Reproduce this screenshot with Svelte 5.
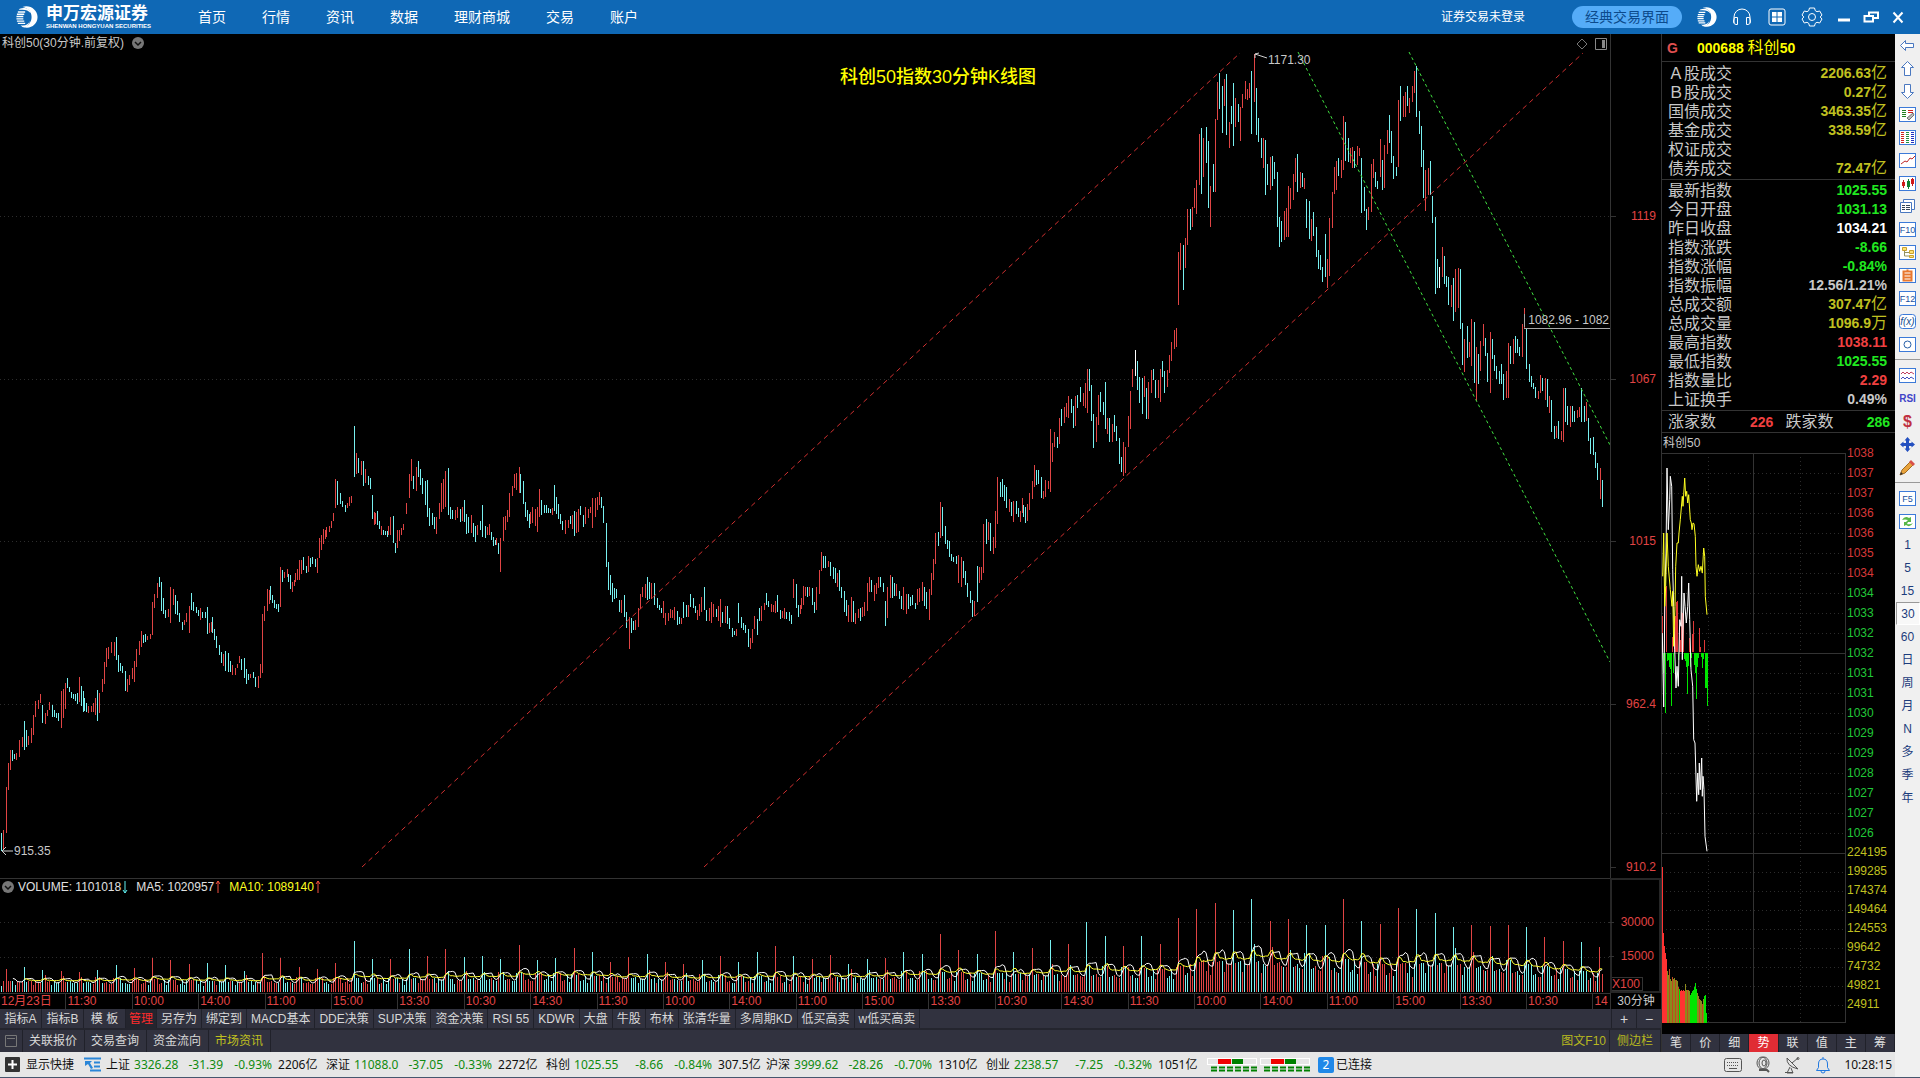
<script lang="ts">
	type Bar = { x: number; top: number; bottom: number; kind: string };

	const PLOT_W = 1610;
	const PRICE_H = 844;
	const VOL_H = 115;

	// each block: origin, units per pixel on x, then "x high low kind" (y in thirds of a pixel)
	const blocks = [
		{
			x: 0,
			y: 366,
			step: 2.24,
			bars: "3 1300 1352 d;8 1290 1350 u;15 1160 1300 u;19 1090 1170 u;24 1050 1110 u;28 1050 1082 d;37 1060 1080 u;43 1020 1070 u;50 1012 1040 u;55 962 1050 d;64 1007 1035 u;71 985 1030 u;75 945 1005 u;80 903 950 u;91 882 910 u;95 915 968 d;102 940 973 u;111 905 930 u;117 915 950 d;131 940 962 d;138 872 983 u;147 848 928 u;151 835 865 d;160 875 893 d;173 878 913 d;178 832 905 u;186 872 935 d;199 918 940 u;210 908 935 u;219 870 962 d;222 878 940 u;229 838 876 u;235 787 852 u;238 745 800 u;250 727 760 u;261 712 780 d;265 765 815 d;274 798 818 d;281 812 872 d;285 837 875 u;297 803 838 u;301 783 845 u;306 747 800 u;313 723 765 u;318 692 740 u;326 703 725 d;337 702 718 u;342 606 706 u;346 582 625 u;353 548 595 u;357 532 560 d;362 545 632 d;370 630 655 d;377 627 650 u;382 562 668 u;388 568 615 u;393 585 642 d;397 603 645 d;409 665 690 d;417 640 665 u;424 618 698 u;429 580 630 d;440 622 640 d;449 625 660 u;460 635 655 d;465 620 702 d;469 668 700 u;477 652 700 d;485 708 745 d;492 735 765 d;497 757 790 d;505 752 812 d;512 758 815 d;521 795 825 u;528 805 825 u;537 768 790 u;547 775 835 d;552 808 852 d;561 822 835 u;568 815 835 d;573 832 860 d;579 828 865 u;584 792 835 u;588 643 820 u;593 618 663 u;599 568 632 u;607 558 600 d;615 600 625 d;623 612 635 d;628 500 620 u;633 510 545 d;643 508 530 u;651 525 567 d;655 545 577 u;663 520 545 u;671 480 540 u;680 470 510 d;686 497 518 d;691 468 515 u;699 470 493 d;706 478 500 d;711 475 520 u;716 413 475 u;724 387 432 u;732 380 410 u;743 362 385 u;747 340 362 u;751 238 325 u;757 243 315 d;763 280 312 d;773 315 335 d;782 292 318 u;787 288 308 u;794 78 230 d;799 160 222 u;804 175 220 d;810 183 225 u;814 183 257 d;819 208 250 u;830 233 267 d;834 285 358 d;838 335 375 u;846 333 375 d;854 378 405 u;867 393 410 d;875 350 405 u;882 347 430 d;886 428 460 d;890 390 445 u;903 373 390 u;910 310 342 u;917 222 295 u;921 178 243 u;926 228 268 d;933 200 272 u;937 183 230 d;942 207 255 d;947 235 283 d;957 240 350 d;963 325 377 d;969 338 375 d;978 352 402 u;984 308 358 u;989 250 335 u;998 212 322 u;1005 203 345 d;1009 320 358 d;1020 330 360 u;1025 320 355 u;1031 327 365 d;1040 300 365 d;1045 343 402 d;1056 345 400 u;1065 378 425 d;1076 362 390 d;1081 315 410 d;1088 378 413 d;1096 372 405 u;1105 410 438 d;1113 415 435 u;1117 430 462 d;1121 415 515 u;1128 352 422 u;1137 330 365 u;1141 280 350 u;1148 258 288 u;1152 223 265 u;1163 200 280 u;1167 222 280 d;1173 243 312 d;1177 305 350 d;1185 342 383 d;1193 320 368 u;1204 320 395 u;1209 267 350 u;1213 300 345 d;1225 315 340 d;1238 325 345 u;1243 255 332 d;1251 312 357 d;1260 362 390 d;1267 360 402 u;1279 347 372 d;1287 333 408 d;1295 328 395 u;1300 317 345 d;1307 345 380 d;1312 320 372 u;1323 320 340 u;1328 293 385 u;1335 293 352 u;1343 277 315 u;1347 290 325 d;1352 318 370 d;1358 370 502 d;1363 485 570 d;1372 550 605 d;1380 567 595 d;1387 600 635 d;1399 585 650 d;1404 635 685 d;1410 650 748 u;1415 655 698 d;1424 660 690 u;1430 625 682 u;1434 583 628 u;1440 560 592 u;1450 532 600 d;1459 550 598 u;1466 550 615 d;1473 595 625 d;1482 625 640 d;1486 602 655 u;1491 640 675 u;1502 628 655 u;1510 620 660 u;1517 633 675 d;1527 655 672 u;1532 605 655 d;1542 615 650 u;1547 582 620 d;1553 595 625 d;1562 630 660 u",
		},
		{
			x: 600,
			y: 316,
			step: 2.613,
			bars: "272 712 780 d;279 780 812 d;291 757 818 u;296 763 800 u;304 778 800 d;315 747 832 u;320 787 818 d;328 768 820 u;333 768 822 d;339 805 838 d;347 835 860 d;356 837 857 u;362 760 818 d;369 800 835 d;380 825 848 d;388 838 892 d;393 863 897 u;398 837 878 u;404 798 838 u;411 808 855 d;417 773 813 d;422 768 813 u;429 758 780 u;435 730 765 d;447 763 785 u;459 753 790 u;464 735 785 d;471 780 807 d;482 773 808 u;495 785 812 d;500 795 822 d;505 687 745 u;513 702 775 d;518 765 800 d;523 765 792 u;532 708 765 u;538 712 738 u;543 712 740 d;548 712 738 u;555 713 765 d;560 757 788 d;566 712 780 u;573 660 732 u;579 606 663 u;589 618 653 d;597 633 650 u;603 637 677 d;615 655 700 d;620 670 710 u;626 660 723 d;632 710 745 d;639 722 787 d;650 765 815 u;658 740 815 u;662 752 817 d;667 790 822 u;675 777 805 u;680 775 812 d;692 757 797 u;698 700 783 u;704 682 727 u;710 690 725 d;718 705 753 u;728 682 715 u;733 682 710 d;740 700 725 d;746 753 827 d;752 710 805 u;758 675 745 u;764 682 743 d;775 702 738 u;782 722 748 d;788 738 778 d;793 712 780 u;801 733 792 u;807 732 778 d;817 735 765 d;824 760 778 d;829 717 765 u;842 697 752 u;847 712 767 d;853 725 778 d;861 717 810 u;867 668 735 u;872 628 690 u;877 548 643 u;884 547 587 d;890 457 565 u;895 470 557 d;903 527 582 d;908 570 597 d;913 573 622 d;918 612 633 d;931 617 642 d;937 615 700 u;944 622 712 u;949 633 685 d;955 662 705 d;960 700 740 d;967 723 758 d;973 750 800 d;979 753 798 u;986 648 755 d;991 652 698 u;997 650 690 u;1002 522 668 u;1010 507 583 d;1016 515 570 u;1020 520 602 d;1027 560 612 u;1033 483 595 u;1039 382 522 u;1046 395 440 d;1051 387 440 d;1062 410 473 d;1070 447 485 u;1080 452 515 u;1088 452 492 d;1099 483 515 u;1103 445 490 u;1112 470 518 d;1117 463 512 u;1122 430 480 u;1130 393 447 u;1135 345 412 u;1145 360 403 d;1153 382 443 d;1160 422 446 u;1165 390 440 u;1172 393 418 u;1177 238 425 u;1182 280 335 u;1187 247 290 u;1195 262 293 d;1201 203 283 u;1206 177 228 d;1214 172 220 u;1219 158 200 u;1224 138 205 u;1231 148 188 d;1237 168 233 d;1242 138 228 u;1248 135 175 d;1255 112 155 d;1263 128 168 u;1273 57 188 u;1278 57 123 d;1284 105 212 d;1289 192 293 d;1297 202 275 u;1303 135 225 u;1308 127 185 d;1316 157 195 d;1320 97 237 d;1327 205 253 u;1332 205 275 d;1338 223 275 u;1344 195 245 d;1350 228 272 d;1357 263 343 d;1362 322 365 d;1368 277 378 u;1373 290 368 u;1381 197 290 u",
		},
		{
			x: 1130,
			y: 6,
			step: 3,
			bars: "2 1052 1168 u;8 988 1040 u;16 930 1008 w;22 963 1050 d;28 1010 1090 d;37 1015 1122 d;43 1008 1070 u;49 1045 1138 d;55 1025 1138 u;64 990 1060 u;70 987 1020 d;76 1020 1075 d;85 1020 1075 u;91 988 1085 u;97 963 1010 d;103 993 1058 d;112 990 1042 u;118 945 1000 u;124 905 962 u;133 870 928 u;139 865 922 u;145 637 795 u;151 610 690 u;160 615 750 d;166 595 683 u;172 507 615 u;181 507 570 d;187 500 562 u;193 445 505 u;199 420 522 u;208 283 435 u;214 265 462 d;220 293 412 u;229 262 368 d;235 303 503 d;241 437 560 u;250 372 455 d;256 238 455 u;262 125 240 u;268 98 207 d;277 137 280 d;283 117 197 u;289 103 285 d;298 247 325 u;304 197 252 d;310 130 318 d;316 175 262 u;325 192 247 d;331 200 303 u;337 163 203 u;346 123 178 u;352 147 180 u;358 130 175 u;364 93 283 d;373 42 187 u;379 145 285 d;385 233 305 d;394 293 355 d;400 295 383 u;406 300 465 d;412 373 435 d;421 350 450 u;427 348 437 d;433 367 417 d;442 397 560 d;448 532 620 d;454 543 605 d;463 513 600 u;469 505 590 u;475 437 590 u;481 443 507 u;490 403 480 u;496 353 427 u;502 343 455 d;511 397 443 u;517 398 442 d;523 415 447 u;529 477 565 d;538 483 597 d;544 537 602 u;550 517 588 d;559 562 650 d;565 630 687 d;571 645 690 d;577 680 725 d;586 583 710 d;592 657 743 u;598 533 707 u;607 457 565 u;613 380 462 u;619 362 450 u;625 353 408 d;634 360 415 u;640 228 390 u;646 247 363 d;655 293 365 d;661 325 370 u;667 320 385 u;673 333 383 d;682 318 375 u;688 323 348 u;694 355 518 d;703 442 512 d;709 507 570 d;715 502 540 u;724 373 515 u;730 357 415 u;736 397 442 d;742 423 447 d;751 297 412 u;757 360 450 d;763 315 445 u;772 270 343 u;778 225 310 d;784 273 368 d;790 347 418 d;799 380 407 d;805 180 380 u;811 137 242 d;820 167 230 u;826 155 230 u;832 137 197 d;838 175 218 u;847 138 187 u;853 93 158 u;859 77 230 d;868 213 283 d;874 257 380 d;880 330 473 d;886 390 513 u;895 385 465 u;901 363 465 d;907 467 548 d;916 532 762 d;922 657 743 d;928 682 743 w;937 620 710 u;943 647 732 d;949 708 740 d;955 712 795 d;964 735 800 u;970 715 843 d;976 687 815 u;985 685 803 u;991 687 867 d;997 850 975 d;1003 897 997 u;1012 858 955 d;1018 905 950 u;1024 838 977 u;1033 847 1028 d;1039 920 1083 u;1045 942 1033 d;1051 903 993 u;1060 853 917 u;1066 893 948 d;1072 940 1025 d;1081 877 1060 u;1087 897 957 d;1093 945 992 d;1099 978 1018 d;1108 993 1033 d;1114 973 1032 d;1120 1003 1080 d;1129 993 1075 u;1135 908 1075 u;1141 917 973 d;1150 898 973 u;1156 888 938 d;1162 897 938 d;1168 922 947 d;1177 853 952 u;1183 805 865 u;1189 867 988 d;1198 972 1027 d;1204 1008 1040 d;1210 1030 1047 d;1216 1042 1075 d;1225 1053 1077 u;1231 1005 1060 u;1237 1013 1053 d;1246 1013 1080 u;1252 1018 1100 d;1258 1068 1120 u;1264 1080 1175 d;1273 1158 1197 d;1285 1143 1197 d;1294 1173 1200 u;1300 1045 1207 u;1306 1045 1145 d;1312 1098 1155 d;1321 1098 1160 u;1327 1098 1147 d;1333 1113 1147 d;1342 1110 1133 u;1348 1100 1132 u;1354 1045 1147 d;1363 1098 1147 d;1369 1087 1143 u;1375 1135 1203 d;1381 1195 1243 d;1390 1192 1245 d;1396 1237 1283 d;1402 1270 1320 d;1411 1285 1377 u;1417 1320 1402 d",
		},
	];

	const PITCH = 2.29;

	const known: Bar[] = blocks.flatMap((b) =>
		b.bars.split(";").map((row) => {
			const [x, high, low, kind] = row.split(" ");
			return { x: b.x + +x / b.step, top: b.y + +high / 3, bottom: b.y + +low / 3, kind };
		})
	);

	// wide gaps between listed bars get the bars in between
	const candles: Bar[] = [];
	known.forEach((bar, i) => {
		candles.push(bar);
		const next = known[i + 1];
		if (!next) return;
		const missing = Math.round((next.x - bar.x) / PITCH) - 1;
		for (let k = 1; k <= missing; k++) {
			const t = k / (missing + 1);
			candles.push({
				x: bar.x + (next.x - bar.x) * t,
				top: bar.top + (next.top - bar.top) * t + 2,
				bottom: bar.bottom + (next.bottom - bar.bottom) * t - 1,
				kind: next.top > bar.top ? "d" : "u",
			});
		}
	});

	const barPath = (list: Bar[], kind: string) =>
		list
			.filter((b) => b.kind === kind)
			.map((b) => `M${Math.floor(b.x) + 0.5} ${Math.round(b.top)}V${Math.round(b.bottom)}`)
			.join("");

	// opening half-hour volume of each session
	const opens = [
		23, 25, 22, 21, 20, 22, 27, 24, 34, 32, 28, 29, 27, 21, 39, 34, 25, 23, 29, 51, 33, 33, 43, 36, 43, 35, 36, 33, 47,
		32, 34, 44, 40, 30, 35, 38, 30, 28, 32, 36, 30, 40, 46, 36, 33, 37, 28, 33, 34, 40, 38, 58, 42, 38, 61, 40, 44, 52,
		48, 70, 56, 46, 56, 48, 74, 83, 89, 82, 93, 71, 73, 67, 67, 93, 71, 68, 84, 83, 79, 65, 67, 66, 67, 65, 55, 51, 50,
		45,
	];
	const openKinds =
		"udduudduuuuddduuuuudduduudddudduduuduududduduuddudduudududud" + "duduuuudduudduduudddu" + "uuduudu";
	const levels = [
		[0, 11], [300, 11], [560, 16], [720, 13], [900, 16], [1080, 19], [1170, 20], [1200, 29], [1260, 32], [1380, 25],
		[1450, 30], [1530, 22], [1610, 17],
	];
	const level = (x: number) => {
		const i = Math.max(1, levels.findIndex(([lx]) => lx > x));
		const [x0, v0] = levels[i - 1];
		const [x1, v1] = levels[i];
		return v0 + ((v1 - v0) * (x - x0)) / (x1 - x0);
	};
	const shape = [1, 1.25, 1.05, 0.9, 0.8, 0.95, 0.75, 1.1];

	const volumes = Array.from({ length: 700 }, (_, i) => {
		const x = 1.5 + i * PITCH;
		const day = Math.floor((i - 2) / 8);
		const slot = (i + 6) % 8;
		const wobble = ((i * 37) % 11) / 22 + 0.75;
		const opening = slot === 0 && day >= 0;
		const h = opening ? opens[day] ?? 45 : level(x) * shape[slot] * wobble;
		const kind = opening ? openKinds[day] ?? "u" : candles[i]?.kind ?? "d";
		return { x, h, kind: kind === "w" ? "d" : kind };
	});
	const volBars: Bar[] = volumes.map((v) => ({ x: v.x, top: VOL_H - 1 - v.h, bottom: VOL_H - 1, kind: v.kind }));

	const average = (n: number) =>
		volumes
			.slice(n)
			.map((v, i) => {
				const sum = volumes.slice(i + 1, i + n + 1).reduce((a, b) => a + b.h, 0);
				return `${v.x.toFixed(1)},${(VOL_H - 1 - sum / n).toFixed(1)}`;
			})
			.join(" ");

	const priceTicks = [["1119", 182], ["1067", 345], ["1015", 507], ["962.4", 670], ["910.2", 833]] as const;
	const volTicks = [["30000", 44], ["15000", 79]] as const;
	const cycle = ["11:30", "10:00", "14:00", "11:00", "15:00", "13:30", "10:30", "14:30"];
	const times = ["12月23日", ...Array.from({ length: 23 }, (_, i) => cycle[i % 8]), "14"];

	const menu = ["首页", "行情", "资讯", "数据", "理财商城", "交易", "账户"];
	const templates = [
		"指标A", "指标B", "模 板", "管理", "另存为", "绑定到", "MACD基本", "DDE决策", "SUP决策", "资金决策", "RSI 55",
		"KDWR", "大盘", "牛股", "布林", "张清华量", "多周期KD", "低买高卖", "w低买高卖",
	];
	const sections = ["关联报价", "交易查询", "资金流向", "市场资讯"];
	const panelTabs = ["笔", "价", "细", "势", "联", "值", "主", "筹"];

	const turnover = [
		["Ａ股成交", "2206.63", "亿"], ["Ｂ股成交", "0.27", "亿"], ["国债成交", "3463.35", "亿"],
		["基金成交", "338.59", "亿"], ["权证成交", "", ""], ["债券成交", "72.47", "亿"],
	];
	const stats = [
		["最新指数", "1025.55", "", "green"], ["今日开盘", "1031.13", "", "green"], ["昨日收盘", "1034.21", "", "white"],
		["指数涨跌", "-8.66", "", "green"], ["指数涨幅", "-0.84%", "", "green"], ["指数振幅", "12.56/1.21%", "", "gray"],
		["总成交额", "307.47", "亿", "olive"], ["总成交量", "1096.9", "万", "olive"], ["最高指数", "1038.11", "", "red"],
		["最低指数", "1025.55", "", "green"], ["指数量比", "2.29", "", "red"], ["上证换手", "0.49%", "", "gray"],
	];
	const miniPrices = [
		1038, 1037, 1037, 1036, 1036, 1035, 1034, 1034, 1033, 1032, 1032, 1031, 1031, 1030, 1029, 1029, 1028, 1027, 1027,
		1026,
	];
	const miniVolumes = [224195, 199285, 174374, 149464, 124553, 99642, 74732, 49821, 24911];

	const trace = (s: string) =>
		s
			.split(" ")
			.map((p) => p.split(",").map(Number))
			.map(([x, y]) => `${((x - 65) / 3).toFixed(1)},${((y - 100) / 3).toFixed(1)}`)
			.join(" ");
	const yellowLine = trace(
		"67,470 70,340 73,560 76,500 80,340 84,440 90,510 95,560 97,515 100,680 104,560 106,440 110,370 114,370 116,340 120,300 126,230 128,260 133,175 136,230 139,215 142,250 145,225 150,300 153,310 155,330 158,310 161,312 165,350 167,440 170,470 174,435 178,455 182,440 186,460 190,385 193,410 195,530 200,585"
	);
	const whiteLine = trace(
		"66,640 70,862 74,500 77,400 80,145 84,330 88,240 90,170 94,200 97,450 100,560 103,690 107,805 110,740 114,800 118,600 122,620 124,470 126,720 131,520 134,560 138,610 142,560 145,490 148,600 152,750 157,800 160,960 164,970 169,1145 172,1060 175,1125 177,1030 180,1110 184,1015 186,1130 188,1070 191,1110 194,1250 200,1295"
	);
	const force = [
		[0, 36], [1, -20], [2, 58], [3, -60], [4, 66], [5, -8], [6, -7], [7, -14], [8, -16], [9, -53], [10, 15], [11, -20],
		[12, 25], [13, 36], [14, 50], [15, 51], [16, -7], [17, 19], [18, 12], [19, 40], [20, 39], [21, 38], [22, -6],
		[23, -8], [24, -14], [25, -41], [26, -13], [27, 14], [28, -14], [29, -5], [30, 18], [31, 31], [32, -12], [33, -20],
		[34, -46], [35, -14], [36, -5], [37, 24], [38, 5], [39, -4], [40, -15], [41, -6], [42, 12], [43, -35], [44, -35],
		[45, -53],
	];
	const turnoverBars = [
		156, 90, 77, 70, 64, 52, 48, 54, 44, 42, 46, 44, 45, 43, 43, 42, 36, 34, 32, 33, 32, 33, 32, 39, 33, 33, 33, 32, 28,
		30, 32, 33, 36, 40, 34, 30, 27, 24, 23, 22, 19, 24, 27, 28, 10,
	];
	const turnoverTone = (i: number) => {
		if (i < 5 || (i > 17 && i < 23)) return "#ff3232";
		if (i === 17 || (i > 27 && i < 35) || i > 41) return "#00e600";
		return i % 3 === 1 ? "#c04a20" : "#8c8a1c";
	};

	const indices = [
		["上证", "3326.28", "-31.39", "-0.93%", "2206亿"],
		["深证", "11088.0", "-37.05", "-0.33%", "2272亿"],
		["科创", "1025.55", "-8.66", "-0.84%", "307.5亿"],
		["沪深", "3999.62", "-28.26", "-0.70%", "1310亿"],
		["创业", "2238.57", "-7.25", "-0.32%", "1051亿"],
	];
	const tools = [
		["back", "up", "down", "note", "table", "line", "candle", "pages", "f10", "tree", "self", "f12", "fx", "circle"],
		["waves", "rsi", "dollar", "move", "pencil"],
		["f5", "refresh"],
	];
	const periods = ["1", "5", "15", "30", "60", "日", "周", "月", "N", "多", "季", "年"];
</script>

{#snippet globe()}
	<svg class="globe" viewBox="0 0 24 24" aria-hidden="true">
		<path fill="#fff" d="M7 1C15-2 23.500 4 23.500 12S16 25.500 8 23c5-1 9-5 9-11C17 6 13 2 7 1z" />
		<path fill="#fff" d="M4 3c6-2 11 0 12 5-2-3-5-4-9-4H3zM5 21c5 1 9-1 10-5-1 5-4 8-8 7z" />
		<path stroke="#fff" stroke-width="1.500" fill="none" d="M2 6.500h8M1 9h8M.5 11.500H8M.5 14H8M1 16.500h8M2 19h8" />
	</svg>
{/snippet}

{#snippet toolIcon(name: string)}
	<svg class="tool-icon" viewBox="0 0 17 17" aria-hidden="true">
		{#if name === "back"}
			<path d="M1.500 8.500l5-5v3h8v4h-8v3z" fill="#fff" stroke="#4a78c0" />
		{:else if name === "up"}
			<path d="M8.500 1.500l6 6h-3v8h-6v-8h-3z" fill="#fff" stroke="#4a78c0" />
		{:else if name === "down"}
			<path d="M8.500 15.500l6-6h-3v-8h-6v8h-3z" fill="#fff" stroke="#4a78c0" />
		{:else if name === "move"}
			<path d="M8.500 1l3 3.500H10V7h2.500V5.500L16 8.500l-3.500 3V10H10v2.500h1.500L8.500 16l-3-3.500H7V10H4.500v1.500L1 8.500l3.500-3V7H7V4.500H5.500z" fill="#2450c0" />
		{:else if name === "pencil"}
			<path d="M1 16l2-5 9-9 3 3-9 9z" fill="#e8a33c" stroke="#a06a20" />
			<path d="M12 1l4 4-2 2-4-4z" fill="#d8504a" />
			<path d="M1 16l1-3 2 2z" fill="#333" />
		{:else if name === "rsi"}
			<text x="8.500" y="12" font-size="10" font-weight="bold" text-anchor="middle" fill="#4044c8">RSI</text>
		{:else if name === "dollar"}
			<text x="8.500" y="14" font-size="16" font-weight="bold" text-anchor="middle" fill="#c03040">$</text>
		{:else if name === "pages"}
			<path d="M4.500 1.500h11v10h-11z" fill="#fff" stroke="#4a78c0" />
			<path d="M1.500 4.500h11v10h-11z" fill="#fff" stroke="#4a78c0" />
			<path d="M3 7.500h3m1 0h4M3 9.500h3m1 0h4M3 11.500h3m1 0h4" stroke="#345" />
		{:else}
			<rect x=".5" y="1.500" width="16" height="14" rx={name === "fx" ? 3 : 0} fill="#fff" stroke="#3c7ad8" />
			{#if name === "note"}
				<path d="M3 4.500h4M3 6.500h4M3 8.500h4M3 10.500h4" stroke="#208020" />
				<path d="M9 4.500h5M9 6.500h5" stroke="#d02020" />
				<path d="M8 12l6-5 1 2-5 5z" fill="#bbb" stroke="#777" />
			{:else if name === "table"}
				<path d="M3.500 3v11" stroke="#d02020" stroke-width="3" stroke-dasharray="1 1" />
				<path d="M8.500 3v11" stroke="#209040" stroke-width="3" stroke-dasharray="1 1" />
				<path d="M13.500 3v11" stroke="#2030c0" stroke-width="3" stroke-dasharray="1 1" />
			{:else if name === "line"}
				<path d="M2 12l4-3 2 1 3-4 2 1 3-3" fill="none" stroke="#c02828" />
			{:else if name === "candle"}
				<path d="M4.500 5v8M13.500 3v8" stroke="#c01818" />
				<path d="M3 7h3v4H3zM12 4h3v5h-3z" fill="#d01818" />
				<path d="M9.500 4v10" stroke="#108030" />
				<path d="M8 6h3v6H8z" fill="#108030" />
			{:else if name === "tree"}
				<path d="M5.500 5v7h5M5.500 8.500h5" fill="none" stroke="#909060" />
				<path d="M3.500 3.500h4v3h-4zM10.500 6.500h4v3h-4zM10.500 11.500h4v2h-4z" fill="#ffe070" stroke="#c8a030" />
			{:else if name === "self"}
				<path d="M4.500 4.500h8v9h-8zM4.500 7.500h8M4.500 10.500h8M8.500 2.500v2" fill="none" stroke="#e87830" stroke-width="2" />
			{:else if name === "circle"}
				<circle cx="8.500" cy="8.500" r="3.500" fill="none" stroke="#2860a8" />
			{:else if name === "waves"}
				<path d="M2 7l2-2 2 2 2-2 2 2 2-2 3 2" fill="none" stroke="#c04060" />
				<path d="M2 12l2-2 2 2 2-2 2 2 2-2 3 2" fill="none" stroke="#4050c0" />
			{:else if name === "refresh"}
				<path d="M3 7q3-5 7-2l2-1v5H7l2-2q-3-1-6 0zM14 10q-3 5-7 2l-2 1V9h4l-1 2q3 1 6-1z" fill="#58b848" />
			{:else if name === "fx"}
				<text x="8.500" y="12" font-size="10" font-style="italic" text-anchor="middle" fill="#205090">f(x)</text>
			{:else}
				<text x="8.500" y="12" font-size="9" text-anchor="middle" fill="#1850a0">{name.toUpperCase()}</text>
			{/if}
		{/if}
	</svg>
{/snippet}

{#snippet chevron()}
	<svg class="chevron" viewBox="0 0 12 12" aria-hidden="true">
		<circle cx="6" cy="6" r="6" fill="#777" />
		<path d="M3 5l3 3 3-3" fill="none" stroke="#111" stroke-width="1.500" />
	</svg>
{/snippet}

{#snippet arrow(down: boolean)}
	<svg class="arrow" viewBox="0 0 6 14" aria-hidden="true">
		{#if down}
			<path d="M3 1v12M1 10l2 3 2-3" fill="none" stroke="#60f0f0" />
		{:else}
			<path d="M3 13V1M1 4l2-3 2 3" fill="none" stroke="#f05040" />
		{/if}
	</svg>
{/snippet}

<div class="app">
	<header>
		<a class="brand" href="#home">
			{@render globe()}
			<span class="brand-name">
				<strong>申万宏源证券</strong>
				<small>SHENWAN HONGYUAN SECURITIES</small>
			</span>
		</a>
		<nav>
			{#each menu as item}
				<a href="#{item}">{item}</a>
			{/each}
		</nav>
		<span class="login">证券交易未登录</span>
		<button class="classic">经典交易界面</button>
		<div class="header-icons">
			<button aria-label="官网">{@render globe()}</button>
			<button aria-label="客服">
				<svg viewBox="0 0 20 20"><path d="M2 16V10a8 8 0 0 1 16 0v6M2.500 10.500h3v7H4q-2.500 0-2.500-3.500zM17.500 10.500h-3v7H16q2.500 0 2.500-3.500z" /></svg>
			</button>
			<button aria-label="应用">
				<svg viewBox="0 0 20 20"><rect x="2" y="2" width="16" height="16" rx="2" /><path class="solid" d="M5 5h4.500v4.500H5zM10.500 5H15v4.500h-4.500zM5 10.500h4.500V15H5zM10.500 10.500H15V15h-4.500z" /></svg>
			</button>
			<button aria-label="设置">
				<svg viewBox="0 0 20 20"><path d="M7.500 1h5l.8 2.700 1.700 1 2.700-.7L20 8l-1.800 2 1.800 2-2.300 4-2.700-.7-1.700 1-.8 2.700h-5l-.8-2.700-1.700-1-2.700.7L0 12l1.800-2L0 8l2.300-4 2.700.7 1.700-1z" stroke-linejoin="round" /><circle cx="10" cy="10" r="3.500" /></svg>
			</button>
		</div>
		<div class="window-icons">
			<button aria-label="最小化"><svg viewBox="0 0 16 16"><path d="M2 11h12" stroke-width="3" /></svg></button>
			<button aria-label="还原"><svg viewBox="0 0 16 16"><path d="M6 7V3.500h9V9h-4M1.500 7H10v5.500H1.500z" stroke-width="2" /></svg></button>
			<button aria-label="关闭"><svg viewBox="0 0 16 16"><path d="M3.500 3.500l9 10M12.500 3.500l-9 10" stroke-width="2" /></svg></button>
		</div>
	</header>

	<div class="body">
		<div class="main">
			<div class="work">
				<section class="charts">
					<div class="pane price">
						<div class="plot">
							<svg viewBox="0 0 {PLOT_W} {PRICE_H}" preserveAspectRatio="none" aria-label="K线图">
								{#each priceTicks.slice(0, 4) as [, y]}
									<path class="grid" d="M0 {y + 0.5}H{PLOT_W}" />
								{/each}
								<g class="bars">
									<path class="up" d={barPath(candles, "u")} />
									<path class="down" d={barPath(candles, "d")} />
									<path class="flat" d={barPath(candles, "w")} />
								</g>
								<path class="rise" d="M362 833L1240 19M704 833L1583 19" />
								<path class="fall" d="M1298 18L1610 628M1409 18L1610 411" />
								<path d="M1524.500 293V280M1524 294.500H1610" fill="none" stroke="#a8a8a8" />
								<path d="M1267 24l-12-4m0 4v-4l4-1" fill="none" stroke="#d0d0d0" />
								<path d="M13 817H2m4-4l-4 4 4 4" fill="none" stroke="#d0d0d0" />
							</svg>
							<div class="pane-title">科创50(30分钟.前复权) {@render chevron()}</div>
							<h1>科创50指数30分钟K线图</h1>
							<span class="mark high">1171.30</span>
							<span class="mark low">915.35</span>
							<span class="mark gap">1082.96 - 1082</span>
							<div class="pane-tools">
								<svg viewBox="0 0 12 12"><path d="M6 1l5 5-5 5-5-5z" fill="none" stroke="#777" /></svg>
								<svg viewBox="0 0 12 12"><path d="M.5 .5h11v11H.5z" fill="none" stroke="#888" /><path d="M7 2h3v8H7z" fill="#888" /></svg>
							</div>
						</div>
						<div class="axis">
							{#each priceTicks as [label, y]}
								<span style="top: {(y / PRICE_H) * 100}%">{label}</span>
							{/each}
						</div>
					</div>
					<div class="pane volume">
						<div class="plot">
							<svg viewBox="0 0 {PLOT_W} {VOL_H}" preserveAspectRatio="none" aria-label="成交量">
								{#each volTicks as [, y]}
									<path class="grid" d="M0 {y + 0.5}H{PLOT_W}" />
								{/each}
								<g class="bars">
									<path class="up" d={barPath(volBars, "u")} />
									<path class="down" d={barPath(volBars, "d")} />
								</g>
								<polyline points={average(5)} fill="none" stroke="#fff" />
								<polyline points={average(10)} fill="none" stroke="#ffff30" />
							</svg>
							<div class="legend">
								{@render chevron()}
								<span>VOLUME: 1101018{@render arrow(true)}</span>
								<span>MA5: 1020957{@render arrow(false)}</span>
								<span class="yellow">MA10: 1089140{@render arrow(false)}</span>
							</div>
						</div>
						<div class="axis boxed">
							{#each volTicks as [label, y]}
								<span style="top: {(y / VOL_H) * 100}%">{label}</span>
							{/each}
							<b>X100</b>
						</div>
					</div>
					<div class="times">
						<div class="scale">
							{#each times as time}
								<span>{time}</span>
							{/each}
						</div>
						<div class="period">30分钟</div>
					</div>
					<div class="templates">
						{#each templates as name, i}
							<button class:wide={i < 3} class:active={i === 3}>{name}</button>
						{/each}
						<div class="zoomers">
							<button aria-label="放大">+</button>
							<button aria-label="缩小">−</button>
						</div>
					</div>
					<div class="sections">
						<button class="fold" aria-label="收起">
							<svg viewBox="0 0 12 12"><path d="M.5 .5h11v11H.5zM2 3.500h8" fill="none" stroke="#777" /></svg>
						</button>
						{#each sections as name, i}
							<button class:olive={i === 3}>{name}</button>
						{/each}
						<div class="side">
							<button>图文F10</button>
							<button>侧边栏</button>
						</div>
					</div>
				</section>

				<aside class="quote">
					<div class="quote-head"><b>G</b><strong>000688 <span>科创</span>50</strong></div>
					<table>
						<tbody>
							{#each turnover as [label, value, unit]}
								<tr><th>{label}</th><td class="olive">{value}<span>{unit}</span></td></tr>
							{/each}
						</tbody>
					</table>
					<table>
						<tbody>
							{#each stats as [label, value, unit, tone]}
								<tr><th>{label}</th><td class={tone}>{value}<span>{unit}</span></td></tr>
							{/each}
						</tbody>
					</table>
					<div class="breadth">
						<span>涨家数</span><b class="red">226</b><span>跌家数</span><b class="green">286</b>
					</div>
					<div class="mini">
						<div class="mini-main">
							<div class="mini-name">科创50</div>
							<svg viewBox="0 0 184 570" preserveAspectRatio="none" aria-label="分时图">
								{#each { length: 19 } as _, i}
									<path class="grid" d="M0 {(i + 1) * 20 + 0.5}H183" />
								{/each}
								{#each { length: 8 } as _, i}
									<path class="grid" d="M0 {419.5 + i * 19}H183" />
								{/each}
								<path class="grid" d="M46.500 0V570M138.500 0V570" />
								<path d="M0 .5H183M0 200.500H183M0 400.500H183M0 569.500H183M91.500 0V570M183.500 0V570" stroke="#333" />
								{#each force as [x, h]}
									<rect {x} y={h > 0 ? 199 - h : 200} width="1" height={Math.abs(h)} fill={h > 0 ? "#e03838" : "#00e600"} />
								{/each}
								<polyline points={whiteLine} fill="none" stroke="#fff" />
								<polyline points={yellowLine} fill="none" stroke="#ffff20" />
								{#each turnoverBars as h, x}
									<rect {x} y={570 - h} width="1" height={h} fill={turnoverTone(x)} />
								{/each}
							</svg>
						</div>
						<ul>
							{#each miniPrices as price, i}
								<li class={i < 7 ? "red" : "green"}>{price}</li>
							{/each}
							{#each miniVolumes as volume}
								<li class="olive vol">{volume}</li>
							{/each}
						</ul>
					</div>
					<div class="panel-tabs">
						{#each panelTabs as tab, i}
							<button class:current={i === 3}>{tab}</button>
						{/each}
					</div>
				</aside>
			</div>

			<footer>
				<button class="shortcut">
					<svg viewBox="0 0 15 15"><rect width="15" height="15" rx="1" fill="#333" /><path d="M7.500 3v9M3 7.500h9" stroke="#fff" stroke-width="2" /></svg>
					显示快捷
				</button>
				<svg class="list-icon" viewBox="0 0 18 15" aria-hidden="true"><path d="M1 1.500h17M11 5.500h6M11 9.500h6M7 13.500h11" stroke="#2a86d8" stroke-width="2" /><path d="M2 4h7L7 6l3 5-2 1-3-5-3 2z" fill="#2a86d8" /></svg>
				{#each indices as [name, price, change, percent, amount]}
					<div class="index">
						<span class="name">{name}</span>
						<span class="last">{price}</span>
						<span class="change">{change}</span>
						<span class="percent">{percent}</span>
						<span class="amount">{amount}</span>
					</div>
				{/each}
				{#each [0, 1] as _}
					<svg class="meter" viewBox="0 0 50 14" aria-hidden="true">
						<rect x=".5" y=".5" width="49" height="6" fill="#e6e6e6" stroke="#fff" />
						<path d="M11 1h13v5H11z" fill="#f00000" />
						<path d="M25 1h11v5H25z" fill="#008000" />
						<path d="M4 9.500h46M4 12.500h46" stroke="#008000" stroke-width="2" stroke-dasharray="6 2" />
					</svg>
				{/each}
				<span class="count">2</span>
				<span>已连接</span>
				<div class="tray">
					<svg viewBox="0 0 18 18"><rect x=".5" y="2.500" width="17" height="13" rx="2" /><path d="M3 6.500h12M3 9.500h12" stroke-dasharray="1 1" /><path d="M5 12.500h8" /></svg>
					<svg viewBox="0 0 18 18"><ellipse cx="10" cy="7" rx="5" ry="6" /><ellipse cx="8" cy="7" rx="5" ry="6" /><ellipse cx="10" cy="7" rx="2" ry="3" /><path d="M5 14h8l2 2" stroke-width="2" /></svg>
					<svg viewBox="0 0 18 18"><path d="M3 2q-1 8 11 11zM8 7l6-5M3 2l11 11M6 11l-3 6h6l-2-5M1 16.500h8" /><circle cx="14" cy="2.500" r="1" /></svg>
					<svg class="bell" viewBox="0 0 18 18"><path d="M9 1v2M2.500 14.500h13l-2-3V8q0-5-4.500-5T4.500 8v3.500zM7 15q0 2 2 2t2-2" /></svg>
					<time>10:28:15</time>
				</div>
			</footer>
		</div>

		<div class="toolbar">
			{#each tools as group}
				<div class="tool-group">
					{#each group as name}
						<button aria-label={name}>{@render toolIcon(name)}</button>
					{/each}
				</div>
			{/each}
			{#each periods as period}
				<button class:pressed={period === "30"}>{period}</button>
			{/each}
		</div>
	</div>
</div>

<style>
	:global(body) {
		margin: 0;
		background: #000;
	}
	.app {
		display: flex;
		flex-direction: column;
		box-sizing: border-box;
		height: 100vh;
		border-bottom: 1px solid #46566e;
		background: #000;
		color: #c8c8c8;
		font: 12px/16px "Liberation Sans", "Noto Sans CJK SC", sans-serif;
	}
	button {
		margin: 0;
		padding: 0;
		border: 0;
		background: none;
		color: inherit;
		font: inherit;
		white-space: nowrap;
	}
	a {
		color: inherit;
		text-decoration: none;
	}
	svg {
		display: block;
	}

	header {
		display: flex;
		align-items: center;
		height: 34px;
		flex: none;
		padding-bottom: 1px;
		box-sizing: border-box;
		background: #0f68b5;
		color: #fff;
	}
	.brand {
		display: flex;
		align-items: center;
		gap: 8px;
		width: 182px;
		padding-left: 16px;
	}
	.globe {
		width: 22px;
		height: 24px;
	}
	.brand-name {
		display: flex;
		flex-direction: column;
		white-space: nowrap;
	}
	.brand-name strong {
		font-size: 17px;
		line-height: 19px;
	}
	.brand-name small {
		font-size: 6px;
		font-weight: bold;
		line-height: 6px;
	}
	nav {
		display: flex;
		flex: 1;
		gap: 36px;
		font-size: 14px;
	}
	.login {
		margin-right: 47px;
	}
	.classic {
		width: 110px;
		height: 22px;
		border-radius: 11px;
		background: #55acf8;
		color: #0c4a8c;
		font-size: 14px;
	}
	.header-icons {
		display: flex;
		gap: 15px;
		margin-left: 15px;
	}
	.header-icons svg {
		width: 20px;
		height: 20px;
		fill: none;
		stroke: #fff;
		stroke-width: 1;
		overflow: visible;
	}
	.header-icons svg.globe {
		stroke: none;
	}
	.header-icons .solid {
		fill: #fff;
		stroke: none;
	}
	.window-icons {
		display: flex;
		gap: 11px;
		margin: 0 14px;
	}
	.window-icons svg {
		width: 16px;
		height: 16px;
		fill: none;
		stroke: #fff;
	}

	.body,
	.work {
		display: flex;
		flex: 1;
		min-height: 0;
	}
	.main {
		display: flex;
		flex: 1;
		flex-direction: column;
		min-width: 0;
	}
	.charts {
		display: flex;
		flex: 1;
		flex-direction: column;
		min-width: 0;
	}
	.pane {
		display: flex;
		min-height: 0;
	}
	.price {
		flex: 1;
	}
	.volume {
		height: 115px;
		box-sizing: border-box;
	}
	.plot {
		position: relative;
		flex: 1;
		min-width: 0;
		overflow: hidden;
	}
	.plot > svg {
		width: 100%;
		height: 100%;
	}
	.volume .plot {
		box-shadow: inset 0 1px #333;
	}
	.grid {
		stroke: #2c2c2c;
		stroke-dasharray: 1 3;
	}
	.bars path {
		shape-rendering: crispEdges;
	}
	.up {
		stroke: #e04444;
	}
	.down {
		stroke: #78f0f0;
	}
	.flat {
		stroke: #fff;
	}
	.rise {
		stroke: #d03030;
		stroke-dasharray: 5 4;
	}
	.fall {
		stroke: #40e040;
		stroke-dasharray: 3 3;
	}
	.pane-title {
		position: absolute;
		top: 1px;
		left: 2px;
		display: flex;
		align-items: center;
		gap: 8px;
	}
	.chevron {
		width: 12px;
		height: 12px;
	}
	h1 {
		position: absolute;
		top: 31px;
		left: 840px;
		margin: 0;
		color: #ffff00;
		font-size: 18px;
		font-weight: 500;
		line-height: 24px;
	}
	.mark {
		position: absolute;
	}
	.high {
		top: 18px;
		left: 1268px;
	}
	.low {
		top: 809px;
		left: 14px;
	}
	.gap {
		top: 278px;
		right: 1px;
	}
	.pane-tools {
		position: absolute;
		top: 4px;
		right: 3px;
		display: flex;
		gap: 7px;
	}
	.pane-tools svg {
		width: 12px;
		height: 12px;
	}
	.axis {
		position: relative;
		width: 50px;
		border-left: 1px solid #333;
		color: #e04444;
	}
	.axis span {
		position: absolute;
		right: 5px;
		transform: translateY(-50%);
	}
	.axis span::before {
		content: "";
		position: absolute;
		top: 8px;
		right: 40px;
		width: 5px;
		height: 1px;
		background: #333;
	}
	.boxed {
		border: 2px solid #262626;
		width: 47px;
	}
	.boxed b {
		position: absolute;
		bottom: 0;
		left: 0;
		border: 1px solid #333;
		border-left: 0;
		padding-right: 2px;
		font-weight: normal;
		line-height: 12px;
	}
	.legend {
		position: absolute;
		top: 1px;
		left: 2px;
		display: flex;
		align-items: center;
		gap: 8px;
		color: #e0e0e0;
	}
	.legend span {
		display: flex;
		align-items: center;
		gap: 1px;
	}
	.legend .yellow {
		color: #ffff20;
	}
	.legend .chevron {
		margin-right: -4px;
	}
	.arrow {
		width: 6px;
		height: 14px;
	}

	.times {
		display: flex;
		height: 16px;
	}
	.scale {
		display: flex;
		flex: 1;
		min-width: 0;
		border-top: 1px solid #333;
		color: #e04444;
		line-height: 15px;
	}
	.scale span {
		flex: 66 1 0;
		box-sizing: border-box;
		min-width: 0;
		padding-left: 1px;
		border-left: 1px solid #333;
		white-space: nowrap;
	}
	.scale span:first-child {
		border-left: 0;
	}
	.scale span:last-child {
		flex-grow: 16;
	}
	.period {
		width: 50px;
		border-left: 1px solid #333;
		text-align: center;
	}
	.templates,
	.sections {
		display: flex;
		box-sizing: border-box;
		background: #31323f;
		color: #d8d8d8;
	}
	.templates {
		height: 21px;
		border-bottom: 2px solid #24252e;
	}
	.sections {
		height: 22px;
	}
	.templates button {
		padding: 0 4px;
		border-right: 1px solid #20212a;
	}
	.templates .wide {
		min-width: 42px;
	}
	.templates .active {
		padding: 0 3px;
		background: #24252e;
		color: #ff2c2c;
	}
	.zoomers,
	.side {
		display: flex;
		margin-left: auto;
	}
	.zoomers button {
		width: 25px;
		border: 0;
		border-left: 1px solid #20212a;
		font-size: 14px;
	}
	.sections button {
		padding: 0 7px 0 6px;
		border-right: 1px solid #20212a;
	}
	.sections .fold {
		padding: 0 5px;
	}
	.fold svg {
		width: 12px;
		height: 12px;
	}
	.side {
		color: #b8b820;
	}
	.sections .side button {
		padding: 0 7px;
	}
	.sections .side button:first-child {
		padding: 0 3px;
	}

	.quote {
		display: flex;
		flex-direction: column;
		width: 233px;
		border-left: 1px solid #333;
	}
	.quote-head {
		display: flex;
		align-items: center;
		height: 28px;
		box-sizing: border-box;
		padding-left: 5px;
		color: #ffff00;
		font-size: 14px;
		border-bottom: 1px solid #333;
	}
	.quote-head b {
		width: 30px;
		color: #e05050;
	}
	.quote-head span {
		font-size: 16px;
		font-weight: normal;
	}
	table {
		width: 100%;
		border-spacing: 0;
		border-bottom: 1px solid #333;
		padding: 1px 8px 1px 6px;
	}
	.quote-head + table {
		padding-top: 2px;
	}
	th,
	td {
		padding: 0;
		height: 19px;
		line-height: 19px;
	}
	th {
		text-align: left;
		font-size: 16px;
		font-weight: normal;
	}
	td {
		text-align: right;
		font-size: 14px;
		font-weight: bold;
	}
	td span {
		font-size: 16px;
		font-weight: normal;
		line-height: 16px;
	}
	.breadth {
		display: flex;
		align-items: center;
		height: 21px;
		padding: 0 5px 0 6px;
		border-bottom: 1px solid #333;
		font-size: 16px;
		white-space: nowrap;
	}
	.breadth b {
		font-size: 14px;
	}
	.breadth .red {
		margin: 0 12px 0 34px;
	}
	.breadth .green {
		margin-left: auto;
	}
	.red {
		color: #f04040;
	}
	.green {
		color: #20e820;
	}
	.olive {
		color: #c0c020;
	}
	.white {
		color: #fff;
	}
	.mini {
		display: flex;
		flex: 1;
		min-height: 0;
	}
	.mini-main {
		display: flex;
		flex-direction: column;
		width: 184px;
		padding-bottom: 11px;
	}
	.mini-name {
		padding-left: 1px;
		line-height: 20px;
	}
	.mini-main svg {
		width: 100%;
		flex: 1;
		min-height: 0;
	}
	.mini ul {
		flex: 1;
		margin: 0;
		padding: 10px 0 0 1px;
		list-style: none;
	}
	.mini li {
		line-height: 20px;
	}
	.mini .red {
		color: #d83838;
	}
	.mini .green {
		color: #20c838;
	}
	.mini .vol {
		line-height: 19px;
	}
	.panel-tabs {
		display: flex;
		height: 18px;
		background: #31323f;
		color: #e0e0e0;
	}
	.panel-tabs button {
		flex: 1;
		border-right: 1px solid #20212a;
	}
	.panel-tabs .current {
		background: #e02c34;
		color: #fff;
	}

	footer {
		display: flex;
		align-items: center;
		height: 25px;
		background: #e6e6e6;
		color: #111;
		font-family: "Noto Sans", "Noto Sans CJK SC", sans-serif;
		white-space: nowrap;
	}
	.shortcut {
		display: flex;
		align-items: center;
		gap: 6px;
		padding-left: 5px;
	}
	.shortcut svg {
		width: 15px;
		height: 15px;
	}
	.list-icon {
		width: 18px;
		height: 15px;
		margin: 0 5px 0 9px;
	}
	.index {
		display: flex;
		width: 220px;
	}
	.name {
		width: 28px;
	}
	.last,
	.change,
	.percent {
		color: #108a10;
	}
	.last {
		width: 45px;
	}
	.change {
		width: 44px;
		text-align: right;
	}
	.percent {
		width: 49px;
		text-align: right;
	}
	.amount {
		padding-left: 6px;
	}
	.meter {
		width: 50px;
		height: 14px;
		margin: 0 2px 0 1px;
	}
	.count {
		width: 16px;
		margin: 0 2px 0 6px;
		border-radius: 2px;
		background: #2088e8;
		color: #fff;
		text-align: center;
	}
	.tray {
		display: flex;
		align-items: center;
		gap: 12px;
		margin-left: auto;
		padding-right: 3px;
	}
	.tray svg {
		width: 18px;
		height: 18px;
		fill: none;
		stroke: #555;
	}
	.tray .bell {
		stroke: #2078e0;
	}

	.toolbar {
		display: flex;
		flex-direction: column;
		width: 25px;
		background: #f0f0f0;
		color: #1c3c7c;
	}
	.tool-group {
		display: flex;
		flex-direction: column;
	}
	.tool-group + .tool-group {
		margin-top: 3px;
		border-top: 1px solid #999;
		padding-top: 4px;
	}
	.toolbar button {
		display: flex;
		align-items: center;
		justify-content: center;
		box-sizing: border-box;
		height: 23px;
	}
	.tool-icon {
		width: 17px;
		height: 17px;
	}
	.toolbar .pressed {
		margin-left: 1px;
		border: 1px solid #999;
		border-right-color: #fff;
		border-bottom-color: #fff;
		background: #f8f8f8;
	}
</style>
